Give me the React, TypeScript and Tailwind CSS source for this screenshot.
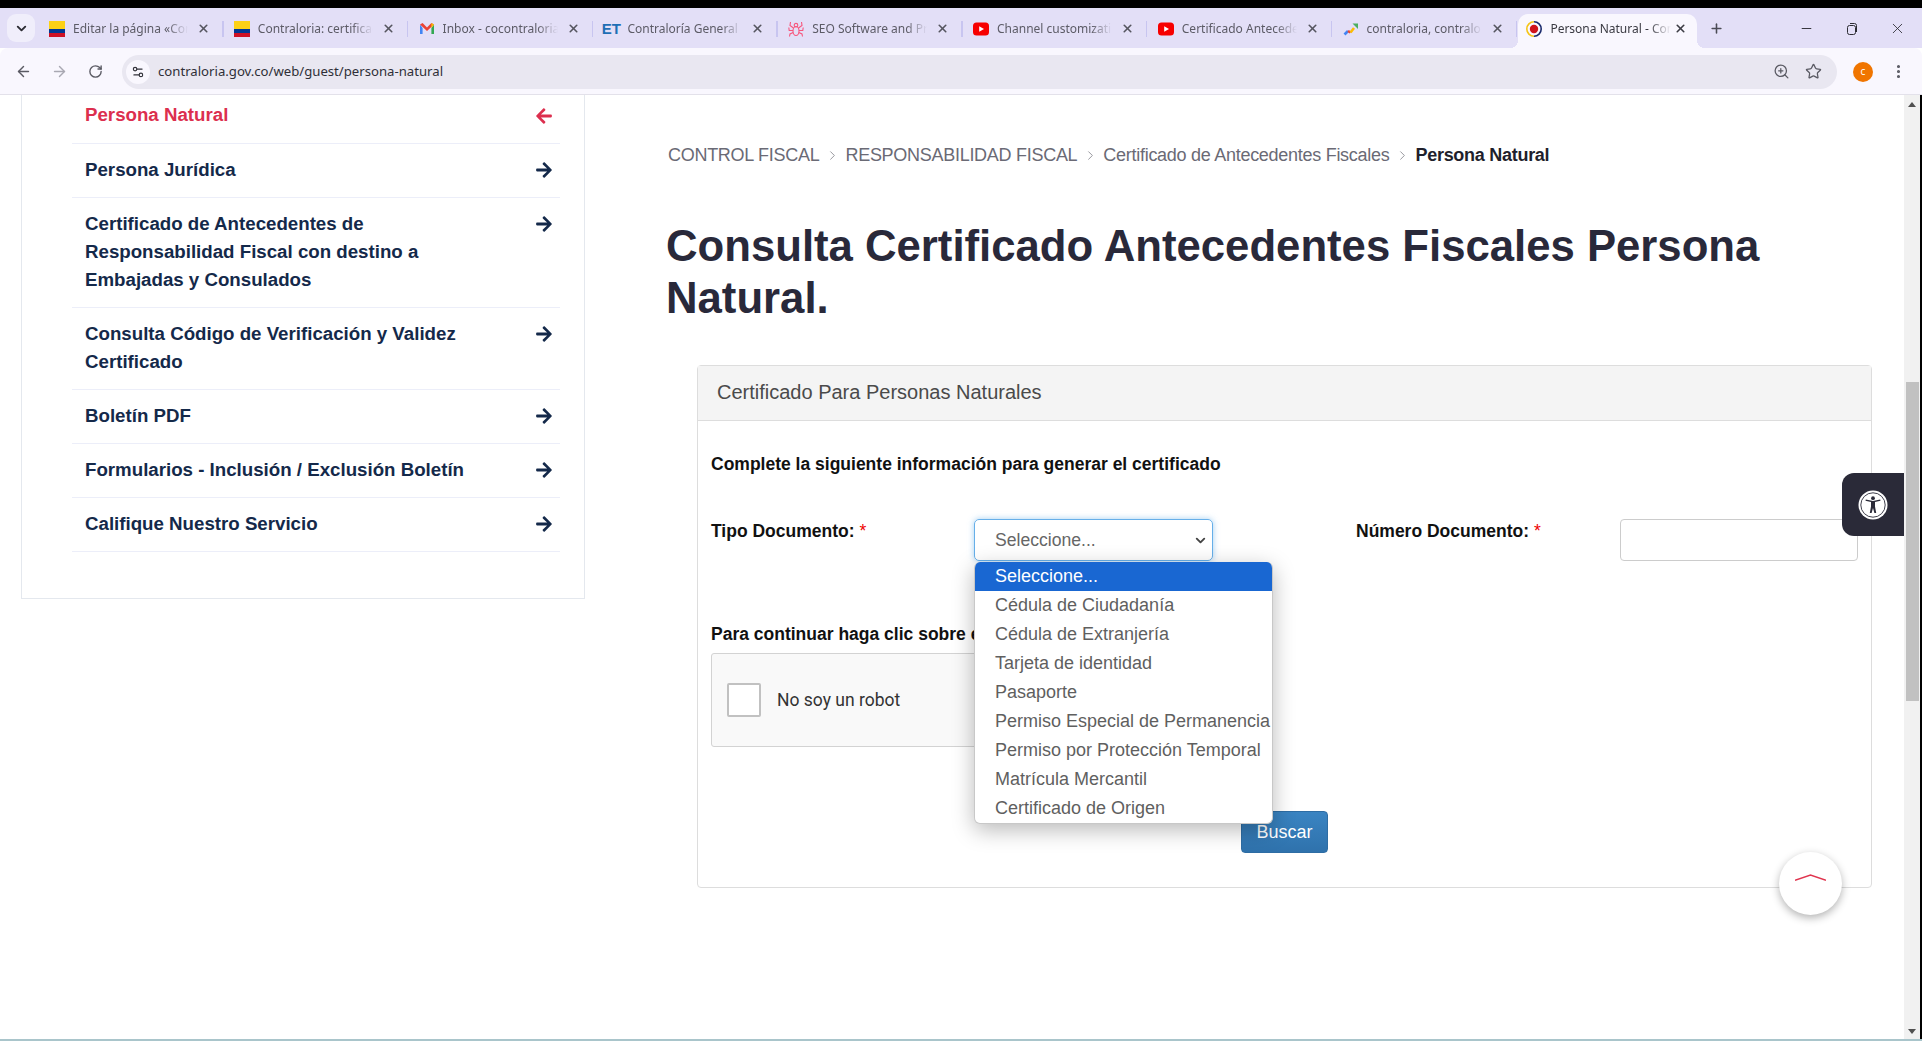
import { ArrowLeft, ArrowRight, ChevronDown, ChevronRight, EllipsisVertical, Minus, Plus, RotateCw, Settings2, Star, X, ZoomIn } from 'lucide-react';
import { FaArrowLeft, FaArrowRight } from 'react-icons/fa';
import type { ReactNode } from 'react';

// ── Favicons ──────────────────────────────────────────────────────────────────
function Flag() {
  return (
    <svg width="16" height="16" viewBox="0 0 16 16">
      <rect width="16" height="8" fill="#fcd116" />
      <rect y="8" width="16" height="4" fill="#003893" />
      <rect y="12" width="16" height="4" fill="#ce1126" />
    </svg>
  );
}

function Gmail() {
  return (
    <svg width="16" height="16" viewBox="0 0 16 16">
      <path d="M1 3.5V13h2.6V7L1 3.5z" fill="#4285f4" />
      <path d="M15 3.5V13h-2.6V7L15 3.5z" fill="#34a853" />
      <path d="M1 3.5 3.6 2 8 6.6 12.4 2 15 3.5 8 10 1 3.5z" fill="#ea4335" />
      <path d="M12.4 2 15 3.5 12.4 7V2z" fill="#fbbc04" />
    </svg>
  );
}

function Spider() {
  return (
    <svg width="16" height="16" viewBox="0 0 16 16" fill="none" stroke="#f7567c" strokeWidth="1.1">
      <ellipse cx="8" cy="10" rx="3" ry="4.5" />
      <circle cx="8" cy="4.2" r="1.8" />
      <path d="M5.5 7 2 4.5 2.5 1M5 9.5H1.2L.8 6.5M5.2 11.5 2 13l-.5 2.5M10.5 7 14 4.5 13.5 1M11 9.5h3.8l.4-3M10.8 11.5 14 13l.5 2.5" />
    </svg>
  );
}

function Youtube() {
  return (
    <svg width="16" height="16" viewBox="0 0 16 16">
      <rect y="1.5" width="16" height="13" rx="3.5" fill="#f70000" />
      <path d="M6.2 5.2v5.6L11 8 6.2 5.2z" fill="#fff" />
    </svg>
  );
}

function Trends() {
  return (
    <svg width="16" height="16" viewBox="0 0 16 16" fill="none" strokeWidth="2.6">
      <path d="M1.5 13.5 5 10" stroke="#4285f4" />
      <path d="M5 10 7.5 11.5" stroke="#ea4335" />
      <path d="M7.5 11.5 11 7" stroke="#fbbc04" />
      <path d="M9.5 2.5H15V8L9.5 2.5z" fill="#4cae60" stroke="none" />
    </svg>
  );
}

function Crest() {
  return (
    <svg width="16" height="16" viewBox="0 0 16 16" fill="none">
      <path d="M8 .8a7.2 7.2 0 0 0 0 14.4" stroke="#f5c518" strokeWidth="1.6" />
      <path d="M8 .8a7.2 7.2 0 0 1 0 14.4" stroke="#1a2a6c" strokeWidth="1.6" />
      <circle cx="8" cy="8" r="4.2" fill="#d0121b" />
    </svg>
  );
}

function Access() {
  return (
    <svg width="30" height="30" viewBox="0 0 30 30">
      <circle cx="15" cy="15" r="14.5" fill="#fff" />
      <circle cx="15" cy="15" r="12.2" fill="none" stroke="#2a2a38" strokeWidth="0.9" />
      <circle cx="15" cy="8.2" r="1.9" fill="#2a2a38" />
      <path d="M7.5 10.8 13 12v4.5L11.8 23h1.8l1.4-5 1.4 5h1.8L17 16.5V12l5.5-1.2-.3-1.3L15 11 7.8 9.5z" fill="#2a2a38" />
    </svg>
  );
}

// ── Browser chrome ────────────────────────────────────────────────────────────
const tabs: { icon: ReactNode; title: string }[] = [
  { icon: <Flag />, title: 'Editar la página «Contraloría' },
  { icon: <Flag />, title: 'Contraloria: certificado de' },
  { icon: <Gmail />, title: 'Inbox - cocontraloria@gmail' },
  { icon: <span className="font-['Liberation_Sans',sans-serif] text-[15px] leading-4 font-bold text-[#1f6fb5]">ET</span>, title: 'Contraloría General rep' },
  { icon: <Spider />, title: 'SEO Software and Products' },
  { icon: <Youtube />, title: 'Channel customization' },
  { icon: <Youtube />, title: 'Certificado Antecedentes' },
  { icon: <Trends />, title: 'contraloria, contraloria' },
];

function TabStrip() {
  return (
    <div className="flex h-[40px] shrink-0 items-end bg-[#e3dff7] font-['Noto_Sans',sans-serif] text-[12px] text-[#5c5b66]">
      <div className="mb-[6px] ml-[7px] mr-[4px] flex h-[28px] w-[28px] items-center justify-center rounded-[9px] bg-[#f0eefb]">
        <ChevronDown size={15} strokeWidth={3} className="text-[#2c2c33]" />
      </div>
      {tabs.map((t) => (
        <div key={t.title} className="flex h-[34px] w-[184.8px] shrink-0 items-center pb-[5px] pl-[10px]">
          <div className="flex w-[16px] shrink-0 justify-center">{t.icon}</div>
          <span className="ml-[8px] w-[115px] shrink-0 overflow-hidden whitespace-nowrap [mask-image:linear-gradient(to_right,black_82%,transparent)]">{t.title}</span>
          <X size={13} strokeWidth={3} className="ml-[9px] shrink-0 text-[#55555f]" />
          <div className="ml-[12px] h-[16px] w-[1.5px] shrink-0 bg-[#c8c5f0]" />
        </div>
      ))}
      <div className="relative ml-[1px] flex h-[34px] w-[179px] shrink-0 items-center rounded-t-[10px] bg-[#f9f7fe] pb-[5px] pl-[8px] text-[#3a3a42]">
        <span className="absolute bottom-0 left-[-8px] h-[8px] w-[8px] bg-[radial-gradient(circle_at_0_0,transparent_8px,#f9f7fe_8px)]" />
        <span className="absolute bottom-0 right-[-8px] h-[8px] w-[8px] bg-[radial-gradient(circle_at_100%_0,transparent_8px,#f9f7fe_8px)]" />
        <Crest />
        <span className="ml-[8px] w-[121px] shrink-0 overflow-hidden whitespace-nowrap [mask-image:linear-gradient(to_right,black_82%,transparent)]">Persona Natural - Contraloría</span>
        <X size={13} strokeWidth={3} className="ml-[3px] shrink-0 text-[#3c3c44]" />
      </div>
      <Plus size={15} strokeWidth={2.5} className="mb-[12px] ml-[11.5px] text-[#4b4b55]" />
      <Minus size={15} strokeWidth={1.5} className="mb-[12px] ml-[75px] text-[#2c2c33]" />
      <svg width="14" height="14" viewBox="0 0 14 14" fill="none" stroke="#2c2c33" strokeWidth="1" className="mb-[12px] ml-[31px]">
        <rect x="2.5" y="3.5" width="8" height="9" rx="2" />
        <path d="M5 1.5h4.5a2 2 0 0 1 2 2V10" />
      </svg>
      <X size={17} strokeWidth={1.2} className="mb-[11px] ml-[30px] text-[#2c2c33]" />
    </div>
  );
}

function Toolbar() {
  return (
    <div className="flex h-[47px] shrink-0 items-center rounded-t-[8px] border-b border-[#e3e1ea] bg-[#f9f7fe] pt-[1px] text-[#5a5a63]">
      <ArrowLeft size={17} strokeWidth={2} className="ml-[15px]" />
      <ArrowRight size={17} strokeWidth={2} className="ml-[19px] text-[#a9a8b2]" />
      <RotateCw size={15} strokeWidth={2.2} className="ml-[20px]" />
      <div className="ml-[19px] flex h-[34px] w-[1715px] items-center rounded-full bg-[#e9e7f1]">
        <div className="ml-[4px] flex h-[24px] w-[24px] items-center justify-center rounded-full bg-[#f9f7fe]">
          <Settings2 size={14} strokeWidth={2} className="text-[#33333b]" />
        </div>
        <span className="ml-[8px] font-['Noto_Sans',sans-serif] text-[13.17px] text-[#2f2f37]">contraloria.gov.co/web/guest/persona-natural</span>
        <ZoomIn size={17} strokeWidth={1.8} className="ml-auto mr-[15px]" />
        <Star size={17} strokeWidth={1.8} className="mr-[15px]" />
      </div>
      <div className="ml-[16px] flex h-[20px] w-[20px] items-center justify-center rounded-full bg-[#f07500] font-['Noto_Sans',sans-serif] text-[10px] text-white">c</div>
      <EllipsisVertical size={17} strokeWidth={2.4} className="ml-[17px]" />
    </div>
  );
}

// ── Sidebar ───────────────────────────────────────────────────────────────────
const links = [
  'Persona Jurídica',
  'Certificado de Antecedentes de Responsabilidad Fiscal con destino a Embajadas y Consulados',
  'Consulta Código de Verificación y Validez Certificado',
  'Boletín PDF',
  'Formularios - Inclusión / Exclusión Boletín',
  'Califique Nuestro Servicio',
];

function Sidebar() {
  return (
    <aside className="ml-[21px] h-[504px] w-[564px] shrink-0 border-x border-b border-[#e4e8ee] pl-[50px] pr-[24px]">
      <div className="flex h-[49px] justify-between border-b border-[#eceef9] pt-[6px] pr-[7px] text-[#dc2f4e]">
        <span className="pl-[13px] text-[18.7px] leading-[28px] font-bold">Persona Natural</span>
        <FaArrowLeft size={18} className="mt-[6px]" />
      </div>
      {links.map((l) => (
        <div key={l} className="flex justify-between border-b border-[#eceef9] pt-[12px] pb-[13px] pr-[7px] text-[#14294a]">
          <span className="w-[420px] pl-[13px] text-[18.7px] leading-[28px] font-bold">{l}</span>
          <FaArrowRight size={18} className="mt-[5px] shrink-0" />
        </div>
      ))}
    </aside>
  );
}

// ── Form ──────────────────────────────────────────────────────────────────────
const options = [
  'Cédula de Ciudadanía',
  'Cédula de Extranjería',
  'Tarjeta de identidad',
  'Pasaporte',
  'Permiso Especial de Permanencia',
  'Permiso por Protección Temporal',
  'Matrícula Mercantil',
  'Certificado de Origen',
];

function Breadcrumb() {
  const sep = <ChevronRight size={15} strokeWidth={1.2} className="mx-[5.5px] shrink-0 text-[#77777f]" />;
  return (
    <div className="ml-[2px] flex h-[24px] items-center text-[18px] tracking-[-0.28px] text-[#6a6a75]">
      <span>CONTROL FISCAL</span>
      {sep}
      <span>RESPONSABILIDAD FISCAL</span>
      {sep}
      <span>Certificado de Antecedentes Fiscales</span>
      {sep}
      <span className="font-bold text-[#1f1f2c]">Persona Natural</span>
    </div>
  );
}

function Form() {
  return (
    <div className="ml-[31px] mr-[32px] mt-[41px] h-[523px] rounded-[4px] border border-[#dddddd]">
      <div className="flex h-[55px] items-center border-b border-[#dddddd] bg-[#f4f4f4] pl-[19px] pb-[2px] text-[20px] text-[#4a4a4a]">
        Certificado Para Personas Naturales
      </div>
      <div className="pl-[13px] pr-[13px] pt-[31px]">
        <p className="text-[17.5px] leading-[24px] font-bold text-[#111]">Complete la siguiente información para generar el certificado</p>
        <div className="mt-[43px] flex">
          <label className="w-[263px] text-[17.5px] leading-[24px] font-bold text-[#111]">
            Tipo Documento: <span className="font-normal text-[#e00]">*</span>
          </label>
          <div className="relative h-[42px] w-[239px]">
            <div className="flex h-full items-center justify-between rounded-[5px] border border-[#66afe9] pl-[20px] pr-[4px] text-[17.6px] text-[#666] shadow-[0_0_6px_rgba(102,175,233,0.6)]">
              Seleccione...
              <ChevronDown size={15} strokeWidth={3} className="text-[#444]" />
            </div>
            {/* Open select list */}
            <div className="absolute left-0 top-[43px] z-10 w-[299px] overflow-hidden rounded-[6px] border-x border-b border-[#c8c8c8] bg-white text-[18px] text-[#5f5f5f] shadow-[0_6px_22px_rgba(0,0,0,0.28)]">
              <div className="flex h-[29px] items-center bg-[#1967d2] pl-[20px] text-white">Seleccione...</div>
              {options.map((o) => (
                <div key={o} className="flex h-[29px] items-center whitespace-nowrap pl-[20px]">{o}</div>
              ))}
            </div>
          </div>
          <label className="ml-[143px] w-[264px] text-[17.5px] leading-[24px] font-bold text-[#111]">
            Número Documento: <span className="font-normal text-[#e00]">*</span>
          </label>
          <div className="h-[42px] w-[238px] rounded-[4px] border border-[#cccccc]" />
        </div>
        <p className="mt-[61px] text-[17.5px] leading-[24px] font-bold text-[#111]">Para continuar haga clic sobre el recuadro:</p>
        <div className="mt-[7px] flex h-[94px] w-[373px] items-center rounded-[3px] border border-[#d3d3d3] bg-[#f9f9f9] pl-[15px]">
          <div className="h-[34px] w-[34px] rounded-[2px] border-2 border-[#c1c1c1] bg-white" />
          <span className="ml-[16px] font-['Roboto',sans-serif] text-[17.5px] text-[#333]">No soy un robot</span>
        </div>
        <button className="ml-[530px] mt-[64px] flex h-[42px] w-[87px] items-center justify-center rounded-[4px] border border-[#2e6da4] bg-[linear-gradient(#3a84c2,#2f72ac)] text-[18px] text-white">
          Buscar
        </button>
      </div>
    </div>
  );
}

// ── Page ──────────────────────────────────────────────────────────────────────
function Scrollbar() {
  return (
    <div className="flex w-[16px] shrink-0 flex-col items-center bg-[#f1f1f1]">
      <div className="mt-[7px] h-0 w-0 border-x-[4px] border-b-[5px] border-x-transparent border-b-[#505050]" />
      <div className="mt-[275px] h-[319px] w-[13px] bg-[#c1c1c1]" />
      <div className="mt-auto mb-[5px] h-0 w-0 border-x-[4px] border-t-[5px] border-x-transparent border-t-[#505050]" />
    </div>
  );
}

export default function App() {
  return (
    <div className="flex h-[1041px] w-[1922px] flex-col overflow-hidden bg-white font-['Liberation_Sans',Arial,sans-serif]">
      <div className="h-[8px] shrink-0 bg-black" />
      <TabStrip />
      <Toolbar />
      <div className="flex min-h-0 flex-1">
        <div className="relative flex min-w-0 flex-1">
          <Sidebar />
          <main className="min-w-0 flex-1 pl-[81px] pt-[48px]">
            <Breadcrumb />
            <h1 className="mt-[53px] text-[43.7px] leading-[52px] font-bold text-[#29293a]">
              Consulta Certificado Antecedentes Fiscales Persona Natural.
            </h1>
            <Form />
          </main>
          <div className="absolute right-0 top-[378px] flex h-[63px] w-[62px] items-center justify-center rounded-l-[12px] bg-[#2a2a38]">
            <Access />
          </div>
          <div className="absolute right-[62px] top-[757px] flex h-[63px] w-[63px] items-start justify-center rounded-full bg-white pt-[22px] shadow-[0_3px_8px_rgba(0,0,0,0.3)]">
            <svg width="31" height="7" viewBox="0 0 31 7" fill="none" stroke="#e0354f" strokeWidth="1.4">
              <path d="M0 6.3 15.5 1 31 6.3" />
            </svg>
          </div>
        </div>
        <Scrollbar />
        <div className="w-[2px] shrink-0 bg-black" />
      </div>
      <div className="h-[2px] shrink-0 bg-[#a9c5cb]" />
    </div>
  );
}
